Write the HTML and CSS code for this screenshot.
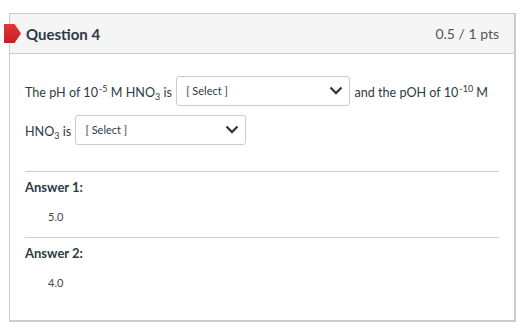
FILE: index.html
```html
<!DOCTYPE html>
<html lang="en">
<head>
    <meta charset="UTF-8">
    <title>Question 4</title>
    <link rel="stylesheet" href="styles.css">
</head>
<body>
    <div class="question">
        <div class="question-header">
            <span class="flag"></span>
            <h2>Question 4</h2>
            <span class="points">0.5 / 1 pts</span>
        </div>
        <div class="question-body">
            <p class="question-text">
                The pH of 10<sup>-5</sup> M HNO<sub>3</sub> is
                <span class="select select-wide">[ Select ]
                    <svg class="chevron" width="14" height="9" viewBox="0 0 14 9"><polyline points="1.5,1.5 7,7 12.5,1.5" fill="none" stroke="#2d3b45" stroke-width="2.3"/></svg>
                </span>
                and the pOH of 10<sup>-10</sup> M HNO<sub>3</sub> is
                <span class="select">[ Select ]
                    <svg class="chevron" width="14" height="9" viewBox="0 0 14 9"><polyline points="1.5,1.5 7,7 12.5,1.5" fill="none" stroke="#2d3b45" stroke-width="2.3"/></svg>
                </span>
            </p>
            <div class="answer">
                <h3>Answer 1:</h3>
                <div class="answer-value">5.0</div>
            </div>
            <div class="answer">
                <h3>Answer 2:</h3>
                <div class="answer-value">4.0</div>
            </div>
        </div>
    </div>
</body>
</html>
```

FILE: styles.css
```css
body {
    margin: 0;
    padding: 13px 0 0 9px;
    background-color: #ffffff;
    font-family: Lato, "Open Sans", sans-serif;
    color: #2d3b45;
}

.question {
    box-sizing: border-box;
    width: 507px;
    height: 309px;
    border: 1px solid #c7cdd1;
    border-bottom-width: 2px;
    border-right-width: 2px;
}

.question-header {
    position: relative;
    display: flex;
    align-items: center;
    justify-content: space-between;
    height: 39px;
    padding: 0 15px 0 16px;
    background-color: #f5f5f5;
    border-bottom: 1px solid #c7cdd1;
}

    .question-header h2 {
        margin: 0;
        font-size: 15px;
        font-weight: bold;
        color: #2d3b45;
    }

    .question-header .points {
        font-size: 14px;
        color: #555555;
    }

.flag {
    position: absolute;
    left: -6px;
    top: 10px;
    width: 17px;
    height: 19px;
    background: linear-gradient(#e0383c, #c51e23);
    clip-path: polygon(0 0, 62% 0, 100% 50%, 62% 100%, 0 100%);
}

.question-body {
    padding: 19px 15px 0 15px;
}

.question-text {
    margin: 0 0 20px 0;
    font-size: 12.6px;
    line-height: 39px;
    color: #2d3b45;
}

    .question-text sup,
    .question-text sub {
        font-size: 9px;
        vertical-align: baseline;
        position: relative;
        line-height: 1;
    }

    .question-text sup {
        top: -5px;
        margin-left: 1px;
    }

    .question-text sub {
        top: 3px;
    }

.select {
    display: inline-flex;
    align-items: center;
    justify-content: space-between;
    position: relative;
    top: -3px;
    box-sizing: border-box;
    width: 171px;
    height: 30px;
    padding: 0 6px 0 9px;
    margin: 0 1px;
    border: 1px solid #c7cdd1;
    border-radius: 3px;
    background-color: #ffffff;
    font-size: 11px;
    line-height: 28px;
    vertical-align: middle;
}

.select-wide {
    width: 174px;
}

.answer {
    border-top: 1px solid #c7cdd1;
    padding-top: 6px;
}

    .answer h3 {
        margin: 0;
        font-size: 13px;
        font-weight: bold;
        line-height: 18px;
        color: #2d3b45;
    }

    .answer .answer-value {
        padding: 14px 0 13px 23px;
        font-size: 11px;
        line-height: 14px;
        color: #444444;
    }
```
